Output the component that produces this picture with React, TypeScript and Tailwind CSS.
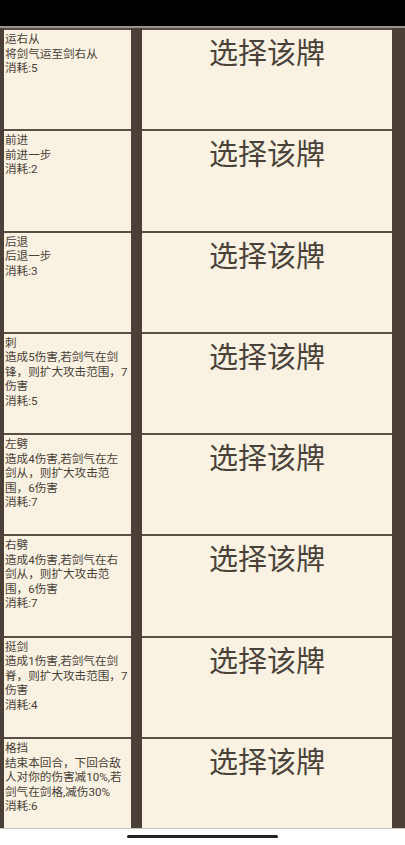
import React from 'react';

interface Card {
  name: string;
  desc: string;
  cost: number;
}

const cards: Card[] = [
  { name: '运右从', desc: '将剑气运至剑右从', cost: 5 },
  { name: '前进', desc: '前进一步', cost: 2 },
  { name: '后退', desc: '后退一步', cost: 3 },
  { name: '刺', desc: '造成5伤害,若剑气在剑锋，则扩大攻击范围，7伤害', cost: 5 },
  { name: '左劈', desc: '造成4伤害,若剑气在左剑从，则扩大攻击范围，6伤害', cost: 7 },
  { name: '右劈', desc: '造成4伤害,若剑气在右剑从，则扩大攻击范围，6伤害', cost: 7 },
  { name: '挺剑', desc: '造成1伤害,若剑气在剑脊，则扩大攻击范围，7伤害', cost: 4 },
  { name: '格挡', desc: '结束本回合，下回合敌人对你的伤害减10%,若剑气在剑格,减伤30%', cost: 6 },
];

const font = { fontFamily: 'Roboto, "Noto Sans CJK SC", sans-serif' };

function CardRow({ card }: { card: Card }) {
  return (
    <div className="flex h-[101.3px] shrink-0">
      <div className="w-[127px] bg-[#f9f1e1] border-t-2 border-[#5a4f45] pl-[1px] pt-[2px] text-[11.6px] leading-[14.5px] text-[#4a4239]">
        <div className="w-[124.5px]">
          <div>{card.name}</div>
          <div>{card.desc}</div>
          <div>消耗:{card.cost}</div>
        </div>
      </div>
      <div className="w-[11px]" />
      <button className="w-[250px] bg-[#f9f1e1] border-t-2 border-[#5a4f45] flex justify-center items-start pt-[4px] text-[29px] leading-[40px] text-[#4a4239]">
        选择该牌
      </button>
    </div>
  );
}

export default function App() {
  return (
    <div className="w-[405px] h-[845px] bg-white flex flex-col overflow-hidden" style={font}>
      <div className="h-[26px] bg-black shrink-0" />
      <div className="h-[2px] bg-[#9a9189] shrink-0" />
      <div className="h-[800px] bg-[#4b4037] pl-[4px] pr-[13px] flex flex-col overflow-hidden shrink-0">
        {cards.map((c) => (
          <CardRow key={c.name} card={c} />
        ))}
      </div>
      <div className="h-[1px] bg-[#c9c4bf] shrink-0" />
      <div className="flex-1 flex justify-center pt-[6px]">
        <div className="w-[151px] h-[3px] rounded-full bg-[#222]" />
      </div>
    </div>
  );
}
